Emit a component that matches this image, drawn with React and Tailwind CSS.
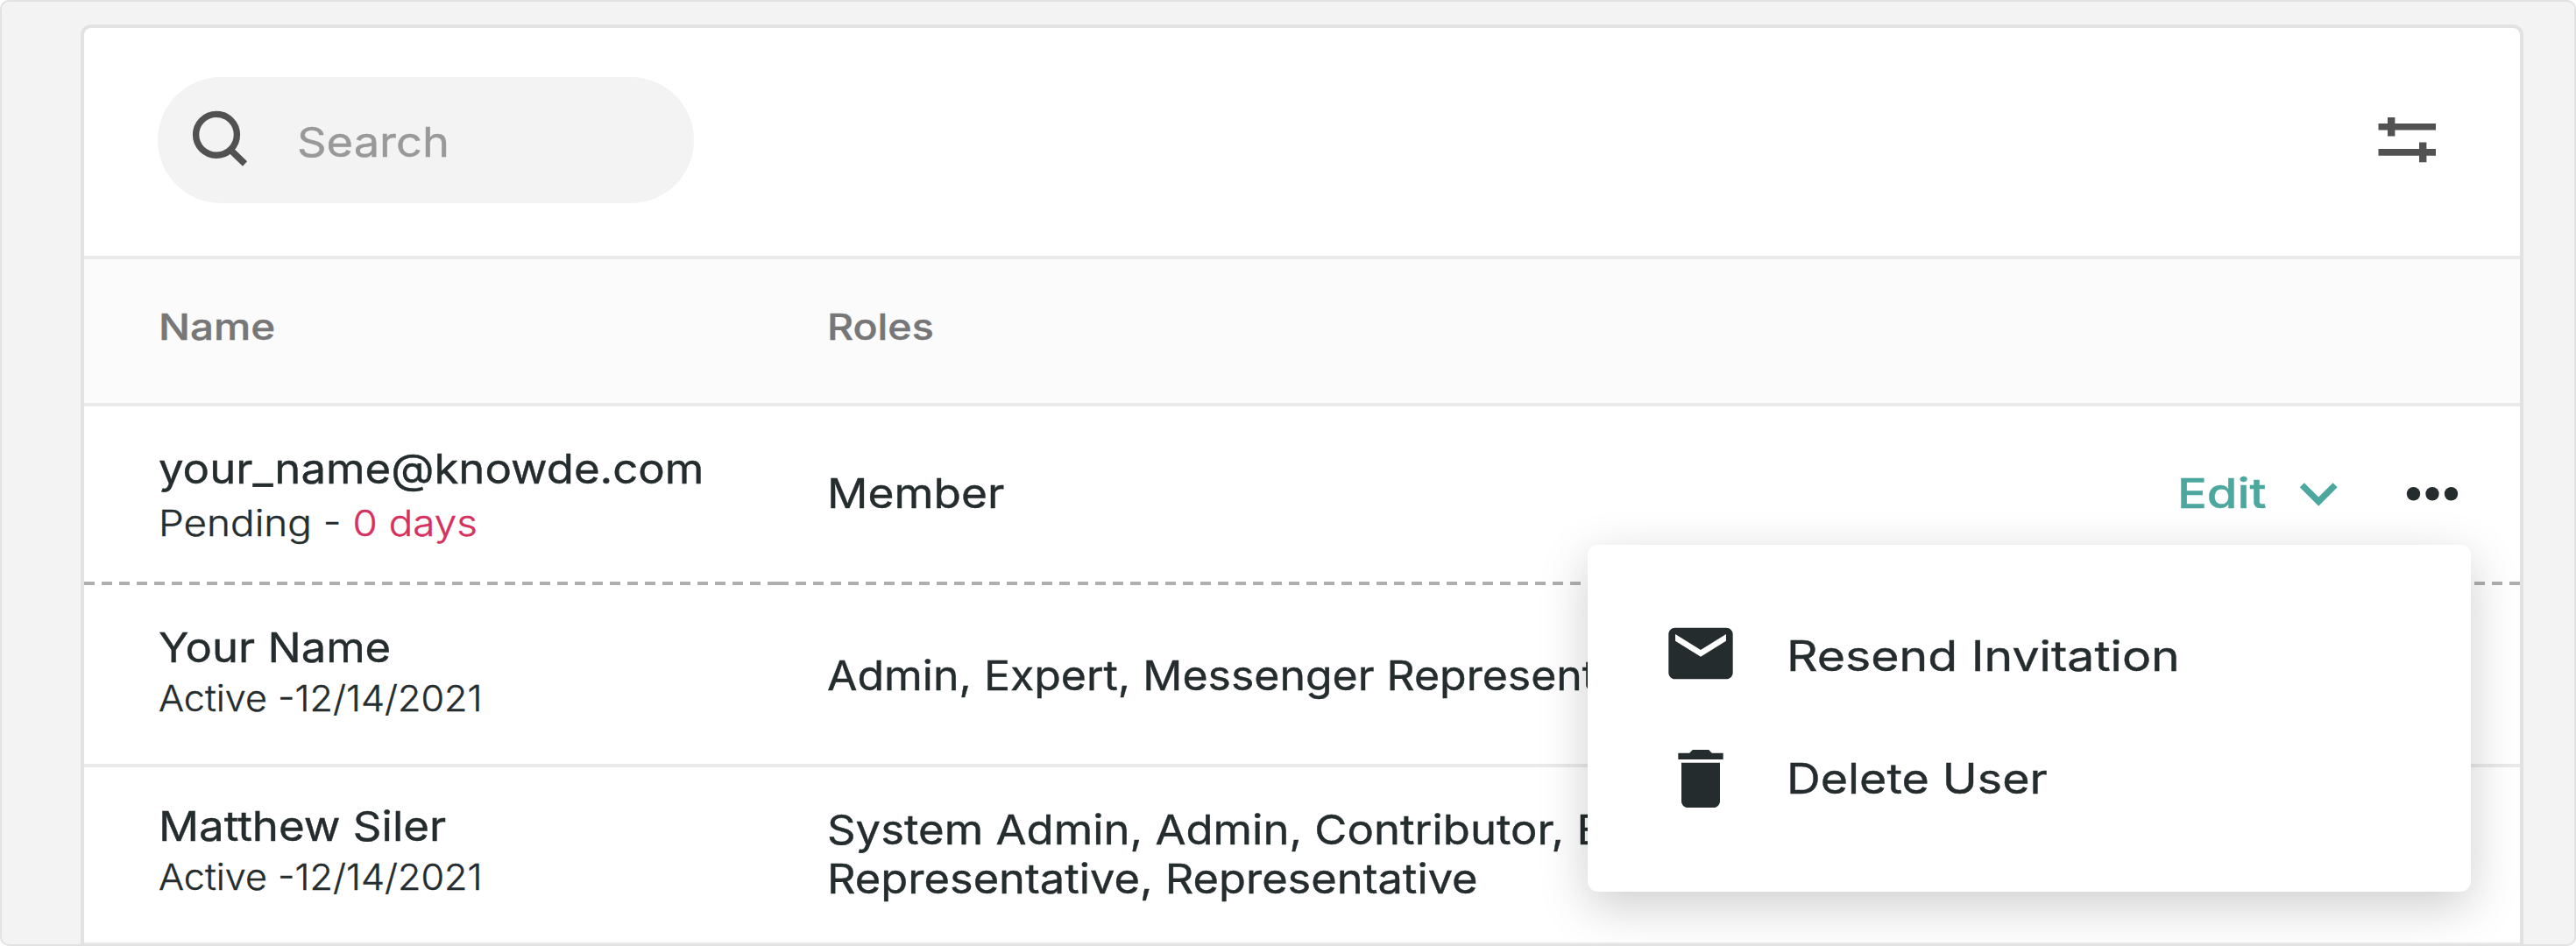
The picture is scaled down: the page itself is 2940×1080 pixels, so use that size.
import React from "react";

const users = [
  {
    name: "your_name@knowde.com",
    nameClass: "scale-x-[1.083]",
    status: "Pending - ",
    statusClass: "scale-x-[1.118]",
    remaining: "0 days",
    roles: [{ text: "Member", className: "scale-x-[1.094]" }],
    rowClass: "h-[200px]",
    cellClass: "pt-[43px] gap-[6px]",
    rolesCellClass: "pt-[71px]",
    invited: true,
  },
  {
    name: "Your Name",
    nameClass: "scale-x-[1.08]",
    status: "Active -12/14/2021",
    statusClass: "scale-x-[1.051]",
    roles: [{ text: "Admin, Expert, Messenger Representative", className: "scale-x-[1.063]" }],
    rowClass: "h-[208px] border-b-4 border-[#eaeaea]",
    cellClass: "pt-[43px] gap-[2px]",
    rolesCellClass: "pt-[75px]",
  },
  {
    name: "Matthew Siler",
    nameClass: "scale-x-[1.085]",
    status: "Active -12/14/2021",
    statusClass: "scale-x-[1.051]",
    roles: [
      { text: "System Admin, Admin, Contributor, Expert", className: "scale-x-[1.081]" },
      { text: "Representative, Representative", className: "scale-x-[1.076]" },
    ],
    rowClass: "h-[204px] border-b-4 border-[#eaeaea]",
    cellClass: "pt-[39px] gap-[2px]",
    rolesCellClass: "pt-[43px]",
  },
];

const SearchIcon = () => (
  <svg className="w-[68px] h-[68px]" viewBox="0 0 68 68" fill="none" stroke="#525252" strokeWidth="7.4">
    <circle cx="31" cy="29.8" r="23.4" />
    <path d="M47 47L63.5 63" />
  </svg>
);

const FilterIcon = () => (
  <svg className="w-[66px] h-[53px]" viewBox="0 0 66 53" fill="#525252">
    <path d="M.5 8h65.5v7.6H.5zM11 1h8.4v21.6H11zM.5 37.1h65.5v7.6H.5zM47 29.6h8.4v22.6H47z" />
  </svg>
);

const ChevronIcon = () => (
  <svg className="w-[44px] h-[28px]" viewBox="0 0 44 28" fill="none" stroke="#4ca79f" strokeWidth="7.2">
    <path d="M3.3 2.8L22.2 21.6L41.1 2.8" />
  </svg>
);

const DotsIcon = () => (
  <svg className="w-[60px] h-[18px]" viewBox="0 0 60 18" fill="#242c2e">
    <circle cx="8.5" cy="8.8" r="7.7" />
    <circle cx="30" cy="8.8" r="7.7" />
    <circle cx="51.5" cy="8.8" r="7.7" />
  </svg>
);

const MailIcon = () => (
  <svg className="w-[88px] h-[88px]" viewBox="0 0 24 24" fill="#242c2e">
    <path d="M20 4H4c-1.1 0-2 .9-2 2v12c0 1.1.9 2 2 2h16c1.1 0 2-.9 2-2V6c0-1.1-.9-2-2-2zm-.1 4.1L12 13 4.1 8.1V6L12 10.9 19.9 6z" />
  </svg>
);

const TrashIcon = () => (
  <svg className="w-[88px] h-[88px]" viewBox="0 0 24 24" fill="#242c2e">
    <path d="M6 19c0 1.1.9 2 2 2h8c1.1 0 2-.9 2-2V7H6v12zM19 4h-3.5l-1-1h-5l-1 1H5v2h14V4z" />
  </svg>
);

const UserMenu = () => (
  <div className="absolute top-[594px] right-[60px] w-[1008px] h-[396px] pt-[80px] pl-[85px] bg-white rounded-[12px] shadow-[0_16px_56px_rgba(0,0,0,0.2)]">
    <button className="flex items-center h-[88px] gap-[54px] text-[48px] leading-[56px] whitespace-nowrap [-webkit-text-stroke:0.4px]">
      <MailIcon />
      <span className="mt-[5px] origin-left scale-x-[1.153]">Resend Invitation</span>
    </button>
    <button className="flex items-center h-[88px] mt-[55px] gap-[54px] text-[48px] leading-[56px] whitespace-nowrap [-webkit-text-stroke:0.4px]">
      <TrashIcon />
      <span className="origin-left scale-x-[1.119]">Delete User</span>
    </button>
  </div>
);

const UserRow = ({ user }) => (
  <>
    <div className={`flex text-[47px] leading-[56px] whitespace-nowrap [-webkit-text-stroke:0.4px] ${user.rowClass}`}>
      <div className={`w-[792px] flex flex-col items-start pl-[85px] ${user.cellClass}`}>
        <p className={`origin-left ${user.nameClass}`}>{user.name}</p>
        <p className={`origin-left text-[41px] font-light whitespace-pre ${user.statusClass}`}>
          {user.status}
          {user.remaining && <span className="text-[#d6305f]">{user.remaining}</span>}
        </p>
      </div>
      <div className={`w-[1240px] flex flex-col items-start pl-[56px] ${user.rolesCellClass}`}>
        {user.roles.map((line) => (
          <p key={line.text} className={`origin-left ${line.className}`}>{line.text}</p>
        ))}
      </div>
      {user.invited && (
        <div className="flex flex-1 justify-end items-start pt-[71px] pr-[70px]">
          <button className="flex text-[#4ca79f] font-medium">
            <span className="origin-left scale-x-[1.192]">Edit</span>
            <span className="pt-[16px] ml-[54px]">
              <ChevronIcon />
            </span>
          </button>
          <button className="pt-[20px] ml-[78px]">
            <DotsIcon />
          </button>
        </div>
      )}
    </div>
    {user.invited && (
      <div className="flex h-[4px]">
        <div className="w-[792px] bg-[repeating-linear-gradient(90deg,#afafaf_0_12px,transparent_12px_20px)]"></div>
        <div className="w-[1236px] bg-[repeating-linear-gradient(90deg,#afafaf_0_12px,transparent_12px_20.09px)]"></div>
        <div className="flex-1 bg-[repeating-linear-gradient(90deg,#afafaf_0_12px,transparent_12px_20px)]"></div>
      </div>
    )}
  </>
);

const App = () => {
  return (
    <div className="w-[2940px] h-[1080px] bg-white overflow-hidden font-['Inter','Liberation_Sans',sans-serif] text-[#242c2e]">
      <div className="h-full border-2 border-[#e2e2e2] rounded-[10px] bg-[#f3f3f3] pt-[26px] pl-[90px] pr-[58px] overflow-hidden">
        <div className="relative w-[2788px] h-[1050px]">
          <div className="border-4 border-b-0 border-[#e2e2e2] rounded-t-[12px] bg-white overflow-hidden">
            {/* TOOLBAR */}
            <div className="h-[264px] border-b-4 border-[#eaeaea] flex justify-between pl-[84px] pr-[96px] pt-[56px]">
              <div className="w-[612px] h-[144px] rounded-full bg-[#f3f3f3] flex items-start pl-[36px] pt-[36px]">
                <SearchIcon />
                <span className="ml-[55px] mt-[10px] text-[47px] leading-[56px] origin-left scale-x-[1.115] text-[#999999] [-webkit-text-stroke:0.4px]">Search</span>
              </div>
              <div className="pt-[45px]">
                <FilterIcon />
              </div>
            </div>

            {/* TABLE HEAD */}
            <div className="h-[168px] border-b-4 border-[#eaeaea] bg-[#fbfbfb] flex pt-[49px] text-[41px] leading-[56px] font-medium text-[#777777] [-webkit-text-stroke:0.4px]">
              <div className="w-[792px] pl-[85px]">
                <p className="w-fit origin-left scale-x-[1.16]">Name</p>
              </div>
              <div className="pl-[56px]">
                <p className="w-fit origin-left scale-x-[1.135]">Roles</p>
              </div>
            </div>

            {users.map((user) => (
              <UserRow key={user.name} user={user} />
            ))}
          </div>

          {/* ROW MENU */}
          <UserMenu />
        </div>
      </div>
    </div>
  );
};

export default App;
